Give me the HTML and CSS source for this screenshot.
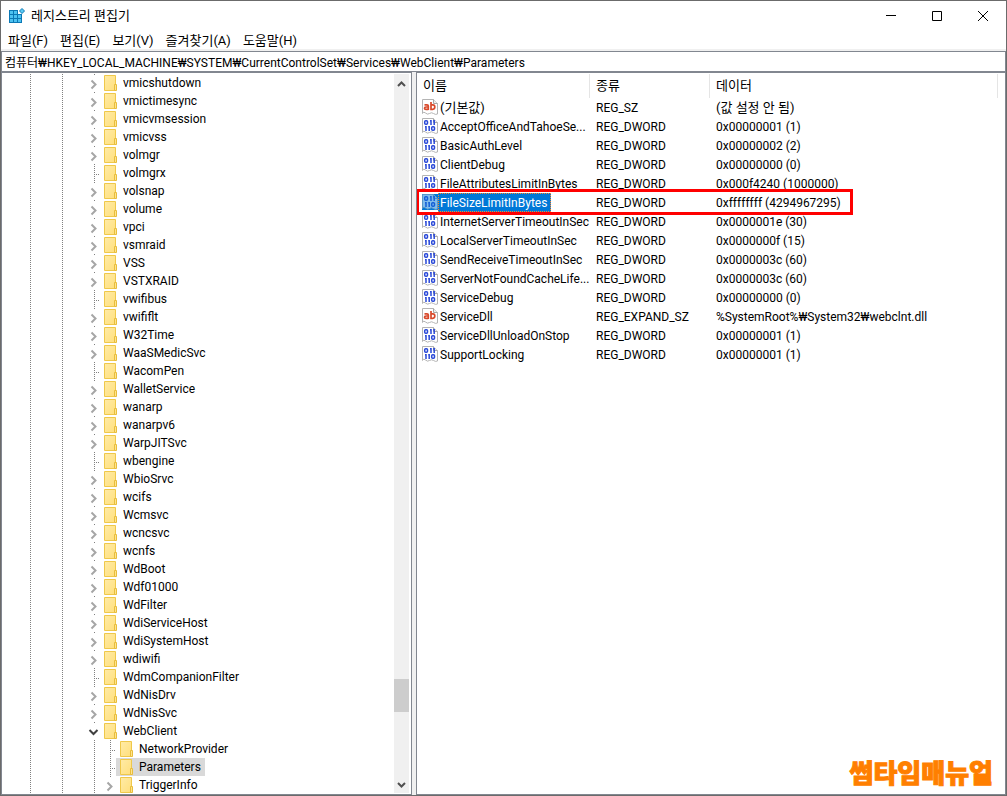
FILE: index.html
```html
<!DOCTYPE html>
<html lang="ko">
<head>
    <meta charset="UTF-8">
    <meta name="viewport" content="width=device-width, initial-scale=1.0">
    <title>레지스트리 편집기</title>
    <link rel="stylesheet" href="styles.css">
</head>
<body>
    <!-- Shared icons -->
    <svg class="sprite" aria-hidden="true">
        <linearGradient id="folder-fill" x1="0" y1="0" x2="1" y2="1">
            <stop offset="0" stop-color="#ffeba6"/>
            <stop offset="1" stop-color="#ffdf7c"/>
        </linearGradient>
        <symbol id="folder" viewBox="0 0 16 18">
            <path d="M.5 1.5h11v15H.5z" fill="url(#folder-fill)" stroke="#efc84a"/>
            <path d="M10.5 10.5h2v6h-2z" fill="#ffe48d" stroke="#e8bd3c"/>
        </symbol>
        <symbol id="right" viewBox="0 0 14 18">
            <path d="M5.500 6.500l4 4-4 4" fill="none" stroke="#a6a6a6" stroke-width="2"/>
        </symbol>
        <symbol id="down" viewBox="0 0 14 18">
            <path d="M3.500 8l4 4 4-4" fill="none" stroke="#404040" stroke-width="2"/>
        </symbol>
        <symbol id="page" viewBox="0 0 16 16">
            <path d="M.5.5h11l4 4v10.500q-2 1-4-.5t-4 0-4-.5-3 .5z" fill="#fff" stroke="#b4b4b4"/>
            <path d="M11.500.5v4h4" fill="#eee" stroke="#a8a8a8"/>
        </symbol>
        <symbol id="string" viewBox="0 0 16 16">
            <use href="#page"/>
            <g fill="none" stroke="#d8492b" stroke-width="1.700">
                <path d="M2.500 5.800h2.500q1.300 0 1.300 1.200v4M6.300 8H4Q2.500 8 2.500 9.200t1.500 1.200h2.300"/>
                <path d="M9 3v7.300h1.800q2 0 2-2.200t-2-2.200H9"/>
            </g>
        </symbol>
        <symbol id="binary" viewBox="0 0 16 16">
            <use href="#page"/>
            <g fill="none" stroke="#2a49d8" stroke-width="1.500">
                <rect x="2.700" y="2.700" width="2.800" height="3.600" rx="1"/>
                <path d="M8 2.700h1V7M11.200 2.700h1V7M3 8.700h1V13M6.200 8.700h1V13"/>
                <rect x="9.700" y="8.700" width="2.800" height="3.600" rx="1"/>
            </g>
        </symbol>
    </svg>

    <div class="window">
        <header class="titlebar">
            <svg class="app-icon" viewBox="0 0 16 16">
                <path d="M0 2h9v4h4v9H0z" fill="#0b78b5"/>
                <path d="M1 3h3v3H1zM5 3h3v3H5zM1 7h3v3H1zM5 7h3v3H5zM9 7h3v3H9zM1 11h3v3H1zM5 11h3v3H5zM9 11h3v3H9z" fill="#4cc2f1"/>
                <path d="M13 .5L15.500 3 13 5.500 10.500 3z" fill="#5bcbf5" stroke="#0b78b5"/>
            </svg>
            <h1>레지스트리 편집기</h1>
            <div class="window-buttons">
                <button aria-label="최소화"><svg viewBox="0 0 12 12"><path d="M1 5.500h10"/></svg></button>
                <button aria-label="최대화"><svg viewBox="0 0 12 12"><path d="M1.500 1.500h9v9h-9z"/></svg></button>
                <button aria-label="닫기"><svg viewBox="0 0 12 12"><path d="M1 1l10 10M11 1L1 11"/></svg></button>
            </div>
        </header>

        <nav class="menu">
            <button>파일(F)</button>
            <button>편집(E)</button>
            <button>보기(V)</button>
            <button>즐겨찾기(A)</button>
            <button>도움말(H)</button>
        </nav>

        <input class="address" type="text" aria-label="주소" value="컴퓨터₩HKEY_LOCAL_MACHINE₩SYSTEM₩CurrentControlSet₩Services₩WebClient₩Parameters">

        <main class="panes">
            <section class="tree-pane">
                <ul class="tree">
                    <li><button class="toggle" aria-label="확장"><svg><use href="#right"/></svg></button><span class="key"><svg><use href="#folder"/></svg>vmicshutdown</span></li>
                    <li><button class="toggle" aria-label="확장"><svg><use href="#right"/></svg></button><span class="key"><svg><use href="#folder"/></svg>vmictimesync</span></li>
                    <li><button class="toggle" aria-label="확장"><svg><use href="#right"/></svg></button><span class="key"><svg><use href="#folder"/></svg>vmicvmsession</span></li>
                    <li><button class="toggle" aria-label="확장"><svg><use href="#right"/></svg></button><span class="key"><svg><use href="#folder"/></svg>vmicvss</span></li>
                    <li><button class="toggle" aria-label="확장"><svg><use href="#right"/></svg></button><span class="key"><svg><use href="#folder"/></svg>volmgr</span></li>
                    <li class="leaf"><span class="key"><svg><use href="#folder"/></svg>volmgrx</span></li>
                    <li><button class="toggle" aria-label="확장"><svg><use href="#right"/></svg></button><span class="key"><svg><use href="#folder"/></svg>volsnap</span></li>
                    <li><button class="toggle" aria-label="확장"><svg><use href="#right"/></svg></button><span class="key"><svg><use href="#folder"/></svg>volume</span></li>
                    <li><button class="toggle" aria-label="확장"><svg><use href="#right"/></svg></button><span class="key"><svg><use href="#folder"/></svg>vpci</span></li>
                    <li><button class="toggle" aria-label="확장"><svg><use href="#right"/></svg></button><span class="key"><svg><use href="#folder"/></svg>vsmraid</span></li>
                    <li><button class="toggle" aria-label="확장"><svg><use href="#right"/></svg></button><span class="key"><svg><use href="#folder"/></svg>VSS</span></li>
                    <li><button class="toggle" aria-label="확장"><svg><use href="#right"/></svg></button><span class="key"><svg><use href="#folder"/></svg>VSTXRAID</span></li>
                    <li class="leaf"><span class="key"><svg><use href="#folder"/></svg>vwifibus</span></li>
                    <li><button class="toggle" aria-label="확장"><svg><use href="#right"/></svg></button><span class="key"><svg><use href="#folder"/></svg>vwififlt</span></li>
                    <li><button class="toggle" aria-label="확장"><svg><use href="#right"/></svg></button><span class="key"><svg><use href="#folder"/></svg>W32Time</span></li>
                    <li><button class="toggle" aria-label="확장"><svg><use href="#right"/></svg></button><span class="key"><svg><use href="#folder"/></svg>WaaSMedicSvc</span></li>
                    <li class="leaf"><span class="key"><svg><use href="#folder"/></svg>WacomPen</span></li>
                    <li><button class="toggle" aria-label="확장"><svg><use href="#right"/></svg></button><span class="key"><svg><use href="#folder"/></svg>WalletService</span></li>
                    <li><button class="toggle" aria-label="확장"><svg><use href="#right"/></svg></button><span class="key"><svg><use href="#folder"/></svg>wanarp</span></li>
                    <li><button class="toggle" aria-label="확장"><svg><use href="#right"/></svg></button><span class="key"><svg><use href="#folder"/></svg>wanarpv6</span></li>
                    <li><button class="toggle" aria-label="확장"><svg><use href="#right"/></svg></button><span class="key"><svg><use href="#folder"/></svg>WarpJITSvc</span></li>
                    <li class="leaf"><span class="key"><svg><use href="#folder"/></svg>wbengine</span></li>
                    <li><button class="toggle" aria-label="확장"><svg><use href="#right"/></svg></button><span class="key"><svg><use href="#folder"/></svg>WbioSrvc</span></li>
                    <li><button class="toggle" aria-label="확장"><svg><use href="#right"/></svg></button><span class="key"><svg><use href="#folder"/></svg>wcifs</span></li>
                    <li><button class="toggle" aria-label="확장"><svg><use href="#right"/></svg></button><span class="key"><svg><use href="#folder"/></svg>Wcmsvc</span></li>
                    <li><button class="toggle" aria-label="확장"><svg><use href="#right"/></svg></button><span class="key"><svg><use href="#folder"/></svg>wcncsvc</span></li>
                    <li><button class="toggle" aria-label="확장"><svg><use href="#right"/></svg></button><span class="key"><svg><use href="#folder"/></svg>wcnfs</span></li>
                    <li><button class="toggle" aria-label="확장"><svg><use href="#right"/></svg></button><span class="key"><svg><use href="#folder"/></svg>WdBoot</span></li>
                    <li><button class="toggle" aria-label="확장"><svg><use href="#right"/></svg></button><span class="key"><svg><use href="#folder"/></svg>Wdf01000</span></li>
                    <li><button class="toggle" aria-label="확장"><svg><use href="#right"/></svg></button><span class="key"><svg><use href="#folder"/></svg>WdFilter</span></li>
                    <li><button class="toggle" aria-label="확장"><svg><use href="#right"/></svg></button><span class="key"><svg><use href="#folder"/></svg>WdiServiceHost</span></li>
                    <li><button class="toggle" aria-label="확장"><svg><use href="#right"/></svg></button><span class="key"><svg><use href="#folder"/></svg>WdiSystemHost</span></li>
                    <li><button class="toggle" aria-label="확장"><svg><use href="#right"/></svg></button><span class="key"><svg><use href="#folder"/></svg>wdiwifi</span></li>
                    <li class="leaf"><span class="key"><svg><use href="#folder"/></svg>WdmCompanionFilter</span></li>
                    <li><button class="toggle" aria-label="확장"><svg><use href="#right"/></svg></button><span class="key"><svg><use href="#folder"/></svg>WdNisDrv</span></li>
                    <li><button class="toggle" aria-label="확장"><svg><use href="#right"/></svg></button><span class="key"><svg><use href="#folder"/></svg>WdNisSvc</span></li>
                    <li><button class="toggle" aria-label="축소"><svg><use href="#down"/></svg></button><span class="key"><svg><use href="#folder"/></svg>WebClient</span>
                        <ul>
                            <li class="leaf"><span class="key"><svg><use href="#folder"/></svg>NetworkProvider</span></li>
                            <li class="leaf"><span class="key current"><svg><use href="#folder"/></svg>Parameters</span></li>
                            <li><button class="toggle" aria-label="확장"><svg><use href="#right"/></svg></button><span class="key"><svg><use href="#folder"/></svg>TriggerInfo</span></li>
                        </ul>
                    </li>
                </ul>
                <div class="scrollbar">
                    <button aria-label="위로"><svg viewBox="0 0 15 16"><path d="M4 11l3.500-3.500L11 11"/></svg></button>
                    <div class="track">
                        <div class="thumb"></div>
                    </div>
                    <button aria-label="아래로"><svg viewBox="0 0 15 16"><path d="M4 6l3.500 3.500L11 6"/></svg></button>
                </div>
            </section>

            <section class="value-pane">
                <table class="values">
                    <colgroup>
                        <col class="col-name">
                        <col class="col-type">
                        <col>
                    </colgroup>
                    <thead>
                        <tr><th>이름</th><th>종류</th><th>데이터</th></tr>
                    </thead>
                    <tbody>
                        <tr class="default"><td><svg><use href="#string"/></svg><span>(기본값)</span></td><td>REG_SZ</td><td class="unset">(값 설정 안 됨)</td></tr>
                        <tr><td><svg><use href="#binary"/></svg><span>AcceptOfficeAndTahoeSe...</span></td><td>REG_DWORD</td><td>0x00000001 (1)</td></tr>
                        <tr><td><svg><use href="#binary"/></svg><span>BasicAuthLevel</span></td><td>REG_DWORD</td><td>0x00000002 (2)</td></tr>
                        <tr><td><svg><use href="#binary"/></svg><span>ClientDebug</span></td><td>REG_DWORD</td><td>0x00000000 (0)</td></tr>
                        <tr><td><svg><use href="#binary"/></svg><span>FileAttributesLimitInBytes</span></td><td>REG_DWORD</td><td>0x000f4240 (1000000)</td></tr>
                        <tr class="selected"><td><svg><use href="#binary"/></svg><span>FileSizeLimitInBytes</span></td><td>REG_DWORD</td><td>0xffffffff (4294967295)</td></tr>
                        <tr><td><svg><use href="#binary"/></svg><span>InternetServerTimeoutInSec</span></td><td>REG_DWORD</td><td>0x0000001e (30)</td></tr>
                        <tr><td><svg><use href="#binary"/></svg><span>LocalServerTimeoutInSec</span></td><td>REG_DWORD</td><td>0x0000000f (15)</td></tr>
                        <tr><td><svg><use href="#binary"/></svg><span>SendReceiveTimeoutInSec</span></td><td>REG_DWORD</td><td>0x0000003c (60)</td></tr>
                        <tr><td><svg><use href="#binary"/></svg><span>ServerNotFoundCacheLife...</span></td><td>REG_DWORD</td><td>0x0000003c (60)</td></tr>
                        <tr><td><svg><use href="#binary"/></svg><span>ServiceDebug</span></td><td>REG_DWORD</td><td>0x00000000 (0)</td></tr>
                        <tr><td><svg><use href="#string"/></svg><span>ServiceDll</span></td><td>REG_EXPAND_SZ</td><td>%SystemRoot%₩System32₩webclnt.dll</td></tr>
                        <tr><td><svg><use href="#binary"/></svg><span>ServiceDllUnloadOnStop</span></td><td>REG_DWORD</td><td>0x00000001 (1)</td></tr>
                        <tr><td><svg><use href="#binary"/></svg><span>SupportLocking</span></td><td>REG_DWORD</td><td>0x00000001 (1)</td></tr>
                    </tbody>
                </table>
                <div class="watermark">썸타임매뉴얼</div>
            </section>
        </main>
    </div>
</body>
</html>
```

FILE: styles.css
```css
:root {
    --frame: #6b6b6b;
    --edge: #828790;
    --face: #f0f0f0;
    --dots: #808080;
    --select: #0078d7;
    --mark: #ff0000;
}

*,
*::before,
*::after {
    box-sizing: border-box;
}

body {
    margin: 0;
    font-family: Roboto, "Noto Sans CJK KR", sans-serif;
    font-size: 12px;
    line-height: 18px;
    color: #000;
}

button {
    padding: 0;
    border: none;
    background: none;
    font: inherit;
    color: inherit;
}

.sprite {
    position: absolute;
    width: 0;
    height: 0;
}

.window {
    display: flex;
    flex-direction: column;
    height: 100vh;
    border: 1px solid var(--frame);
    background: #fff;
}

.titlebar {
    display: flex;
    align-items: center;
    flex: none;
    height: 30px;
    padding-left: 8px;
}

.app-icon {
    width: 16px;
    height: 16px;
    margin-right: 6px;
}

.titlebar h1 {
    flex: 1;
    margin: 0;
    font-size: 13px;
    font-weight: normal;
}

.window-buttons {
    display: flex;
}

.window-buttons button {
    display: flex;
    align-items: center;
    justify-content: center;
    width: 46px;
    height: 30px;
}

.window-buttons svg {
    width: 12px;
    height: 12px;
    fill: none;
    stroke: #000;
}

.menu {
    display: flex;
    flex: none;
    gap: 12px;
    height: 20px;
    padding: 1px 0 0 7px;
    border-bottom: 2px solid var(--face);
    font-size: 13px;
}

.address {
    flex: none;
    width: 100%;
    height: 21px;
    padding: 0 3px;
    border: 1px solid var(--edge);
    font: inherit;
    color: inherit;
}

.panes {
    display: flex;
    flex: 1;
    min-height: 0;
    background: var(--face);
    gap: 4px;
}

.tree-pane,
.value-pane {
    border: 1px solid var(--edge);
    background: #fff;
    overflow: hidden;
}

/* Key tree */
.tree-pane {
    display: flex;
    flex: none;
    width: 411px;
    padding: 1px 2px 1px 0;
}

.tree,
.tree ul {
    margin: 0;
    padding: 0;
    list-style: none;
}

.tree {
    flex: 1;
    padding-left: 84px;
    background:
        repeating-linear-gradient(var(--dots) 0 1px, transparent 1px 2px) 28px 0 / 1px 100% no-repeat,
        repeating-linear-gradient(var(--dots) 0 1px, transparent 1px 2px) 60px 0 / 1px 100% no-repeat;
}

.tree li {
    display: flex;
    flex-wrap: wrap;
    background: repeating-linear-gradient(var(--dots) 0 1px, transparent 1px 2px) 8px 0 / 1px 100% no-repeat;
}

.tree ul {
    width: 100%;
    padding-left: 16px;
}

.leaf::before {
    content: "";
    width: 14px;
    height: 18px;
    background: repeating-linear-gradient(90deg, var(--dots) 0 1px, transparent 1px 2px) 8px 10px / 6px 1px no-repeat;
}

.toggle {
    width: 14px;
    height: 16px;
    margin: 1px 0;
    background: #fff;
}

.toggle svg {
    display: block;
    width: 14px;
    height: 18px;
    margin-top: -1px;
}

.key {
    display: flex;
    height: 18px;
    padding: 0 4px;
}

.key svg {
    width: 16px;
    height: 18px;
    margin-right: 3px;
}

.current {
    background: #d9d9d9;
}

.scrollbar {
    display: flex;
    flex-direction: column;
    width: 15px;
    background: var(--face);
}

.scrollbar button {
    height: 17px;
}

.scrollbar svg {
    display: block;
    width: 15px;
    height: 16px;
    fill: none;
    stroke: #505050;
    stroke-width: 2;
}

.track {
    display: flex;
    flex-direction: column;
    flex: 1;
}

.track::before {
    content: "";
    flex: 588;
}

.track::after {
    content: "";
    flex: 64;
}

.thumb {
    height: 33px;
    background: #cdcdcd;
}

/* Value list */
.value-pane {
    position: relative;
    flex: 1;
    padding: 1px 7px 0 0;
}

.values {
    width: 100%;
    table-layout: fixed;
    border-collapse: separate;
    border-spacing: 0;
}

.col-name {
    width: 173px;
}

.col-type {
    width: 120px;
}

.values th {
    height: 24px;
    padding: 0 6px;
    border-right: 1px solid #e5e5e5;
    font-size: 13px;
    font-weight: normal;
    text-align: left;
}

.values td {
    height: 19px;
    padding: 0 6px;
    white-space: nowrap;
}

.values td:first-child {
    display: flex;
    padding: 0 0 0 5px;
}

.values td svg {
    flex: none;
    width: 16px;
    height: 16px;
    margin-top: 1px;
}

.values td span {
    padding: 1px 2px 0;
}

.default span,
.values .unset {
    font-size: 13px;
}

.selected svg {
    background: var(--select);
}

.selected use {
    opacity: 0.5;
}

.values .selected span {
    padding-right: 4px;
    background: var(--select);
    color: #fff;
    outline: 1px dotted #ff8728;
    outline-offset: -1px;
}

/* Red frame round the whole record */
.selected td:first-child {
    position: relative;
}

.selected td:first-child::after {
    content: "";
    position: absolute;
    top: -4px;
    left: -1px;
    width: 437px;
    height: 26px;
    border: 3px solid var(--mark);
}

.watermark {
    position: absolute;
    right: 12px;
    bottom: 4px;
    font-family: "Noto Sans CJK KR", sans-serif;
    font-size: 26px;
    font-weight: 900;
    line-height: 36px;
    color: #ff7f00;
    -webkit-text-stroke: 1px #ff7f00;
}
```
